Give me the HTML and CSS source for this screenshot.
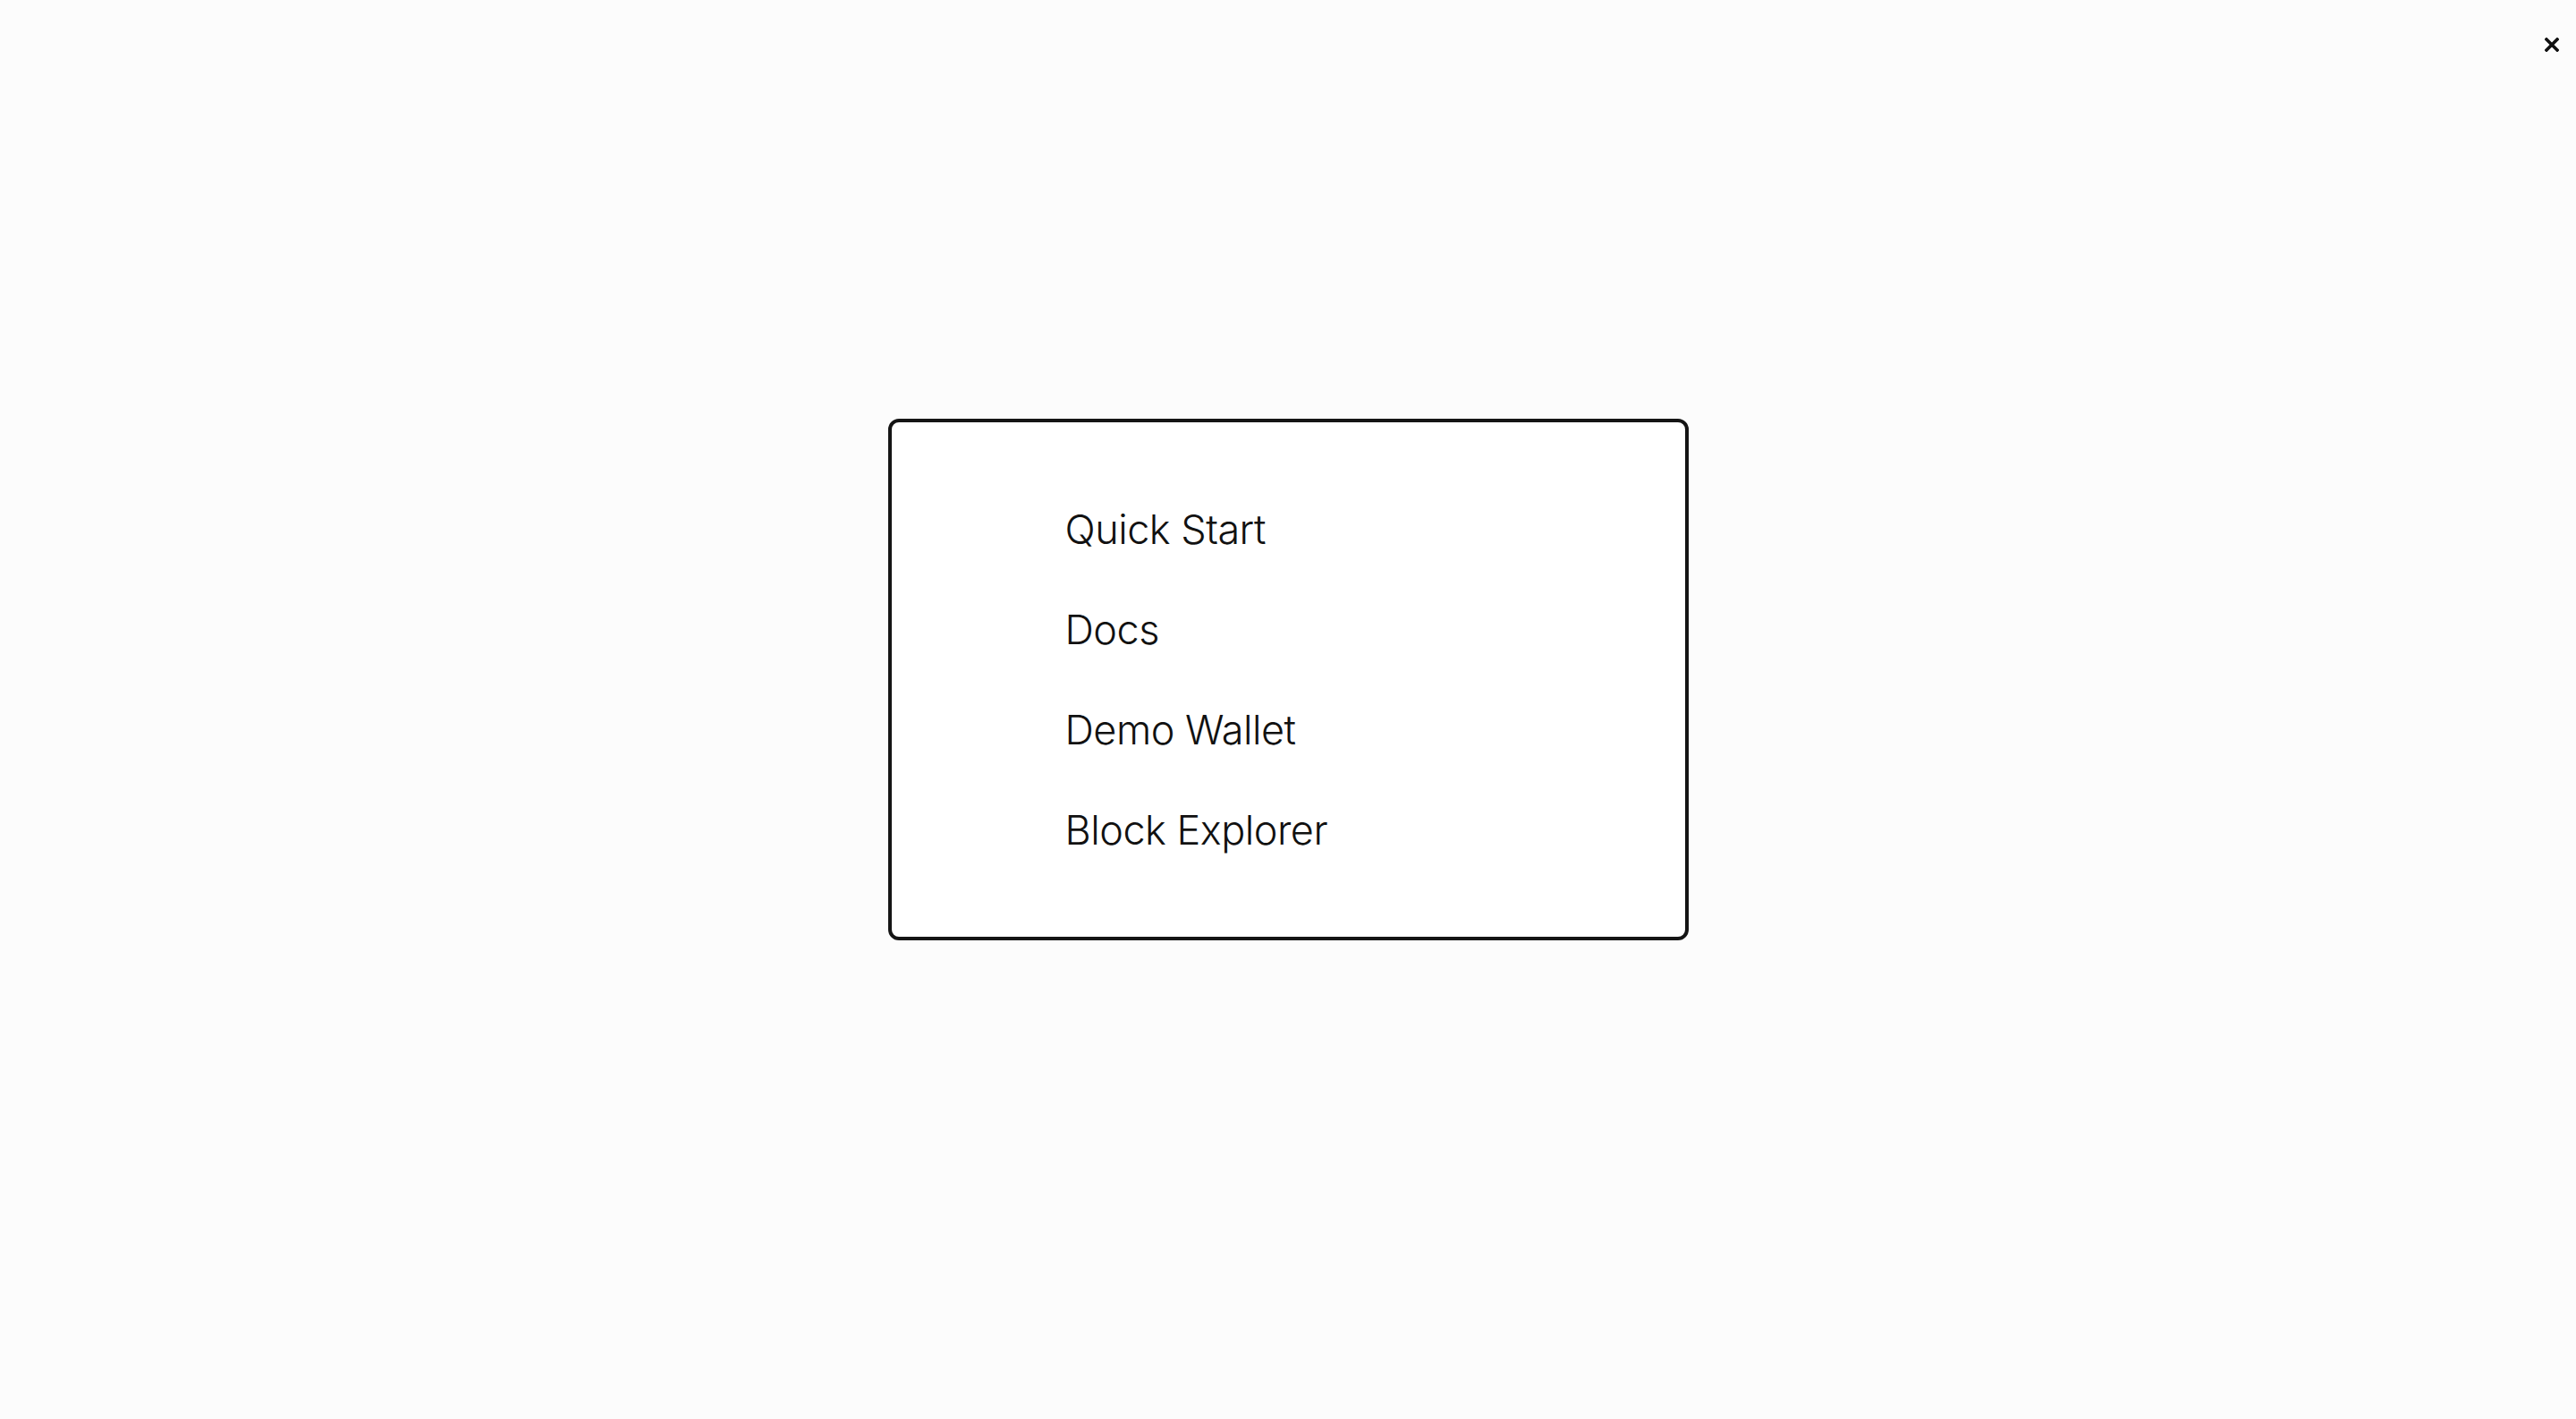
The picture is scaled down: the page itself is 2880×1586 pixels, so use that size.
FILE: index.html
```html
<!DOCTYPE html>
<html lang="en">
<head>
    <meta charset="UTF-8">
    <meta name="viewport" content="width=device-width, initial-scale=1.0">
    <link rel="stylesheet" href="styles.css">
    <title>Menu</title>
</head>
<body>
    <button class="close" aria-label="Close">
        <svg viewBox="0 0 16 16" width="16" height="16">
            <path d="M2 2 L14 14 M14 2 L2 14" stroke="#111" stroke-width="3.6" stroke-linecap="square" fill="none"/>
        </svg>
    </button>
    <main class="stage">
        <nav class="menu">
            <a href="#">Quick Start</a>
            <a href="#">Docs</a>
            <a href="#">Demo Wallet</a>
            <a href="#">Block Explorer</a>
        </nav>
    </main>
</body>
</html>
```

FILE: styles.css
```css
body{
    margin: 0;
    padding: 0;
    background-color: #fcfcfc;
    min-height: 100vh;
    font-family: Inter, "Noto Sans", sans-serif;
    color: #111;
}

.close{
    position: absolute;
    top: 42px;
    right: 19px;
    padding: 0;
    border: none;
    background: none;
    cursor: pointer;
    line-height: 0;
}

.stage{
    display: flex;
    justify-content: center;
    padding-top: 468px;
}

.menu{
    width: 895px;
    box-sizing: border-box;
    border: 4px solid #151515;
    border-radius: 12px;
    background: #fff;
    padding: 92px 194px;
    display: flex;
    flex-direction: column;
    gap: 57px;
}

.menu a{
    font-size: 45px;
    line-height: 55px;
    font-weight: 300;
    letter-spacing: -0.5px;
    color: #111;
    text-decoration: none;
}
```
